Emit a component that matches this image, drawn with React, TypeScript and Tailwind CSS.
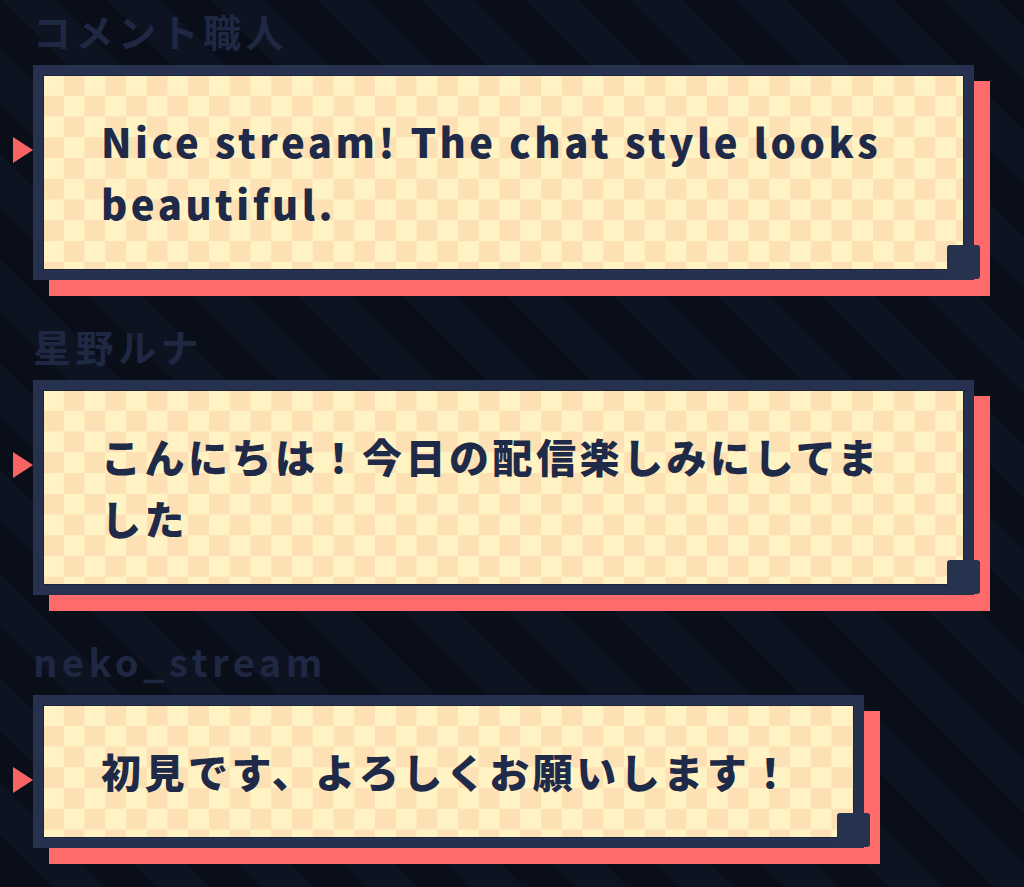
import React from "react";

type Msg = { name: string; text: string };

const messages: Msg[] = [
  { name: "コメント職人", text: "Nice stream! The chat style looks beautiful." },
  { name: "星野ルナ", text: "こんにちは！今日の配信楽しみにしてました" },
  { name: "neko_stream", text: "初見です、よろしくお願いします！" },
];

function ChatCard({ m }: { m: Msg }) {
  return (
    <div className="flex flex-col">
      <div className="mb-[14px] text-[38px] leading-[40px] font-bold tracking-[4.5px] text-[#1e2842]">
        {m.name}
      </div>
      <div className="relative w-fit max-w-[941px]">
        <div className="absolute left-[-20px] top-[72px] h-0 w-0 border-y-[13px] border-l-[20px] border-y-transparent border-l-[#f86464]" />
        <div className="relative border-[10px] border-[#26314f] bg-[#fff3c4] bg-[image:repeating-conic-gradient(#fde0b4_0_25%,#fff3c4_0_50%)] bg-[length:41.5px_41.5px] pl-[58px] pr-[60px] pt-[35px] pb-[36px] shadow-[16px_16px_0_#ff6b6b,inset_0_0_0_1px_#1b2339]">
          <p className="text-[40px] leading-[62px] font-black tracking-[3.5px] text-[#1f2a48]">
            {m.text}
          </p>
          <div className="absolute right-[-16px] bottom-[-9px] h-[34px] w-[33px] rounded-[3px] bg-[#27324f]" />
        </div>
      </div>
    </div>
  );
}

export default function App() {
  return (
    <div className="h-[887px] w-full overflow-hidden bg-[#0a0e19] bg-[image:repeating-linear-gradient(45deg,#0a0e19_0px,#0a0e19_37px,#0e1322_37px,#0e1322_74px)] px-[33px] pt-[11px] font-['Noto_Sans_CJK_JP','Noto_Sans',sans-serif]">
      <div className="flex flex-col gap-[46px]">
        {messages.map((m) => (
          <ChatCard key={m.name} m={m} />
        ))}
      </div>
    </div>
  );
}
